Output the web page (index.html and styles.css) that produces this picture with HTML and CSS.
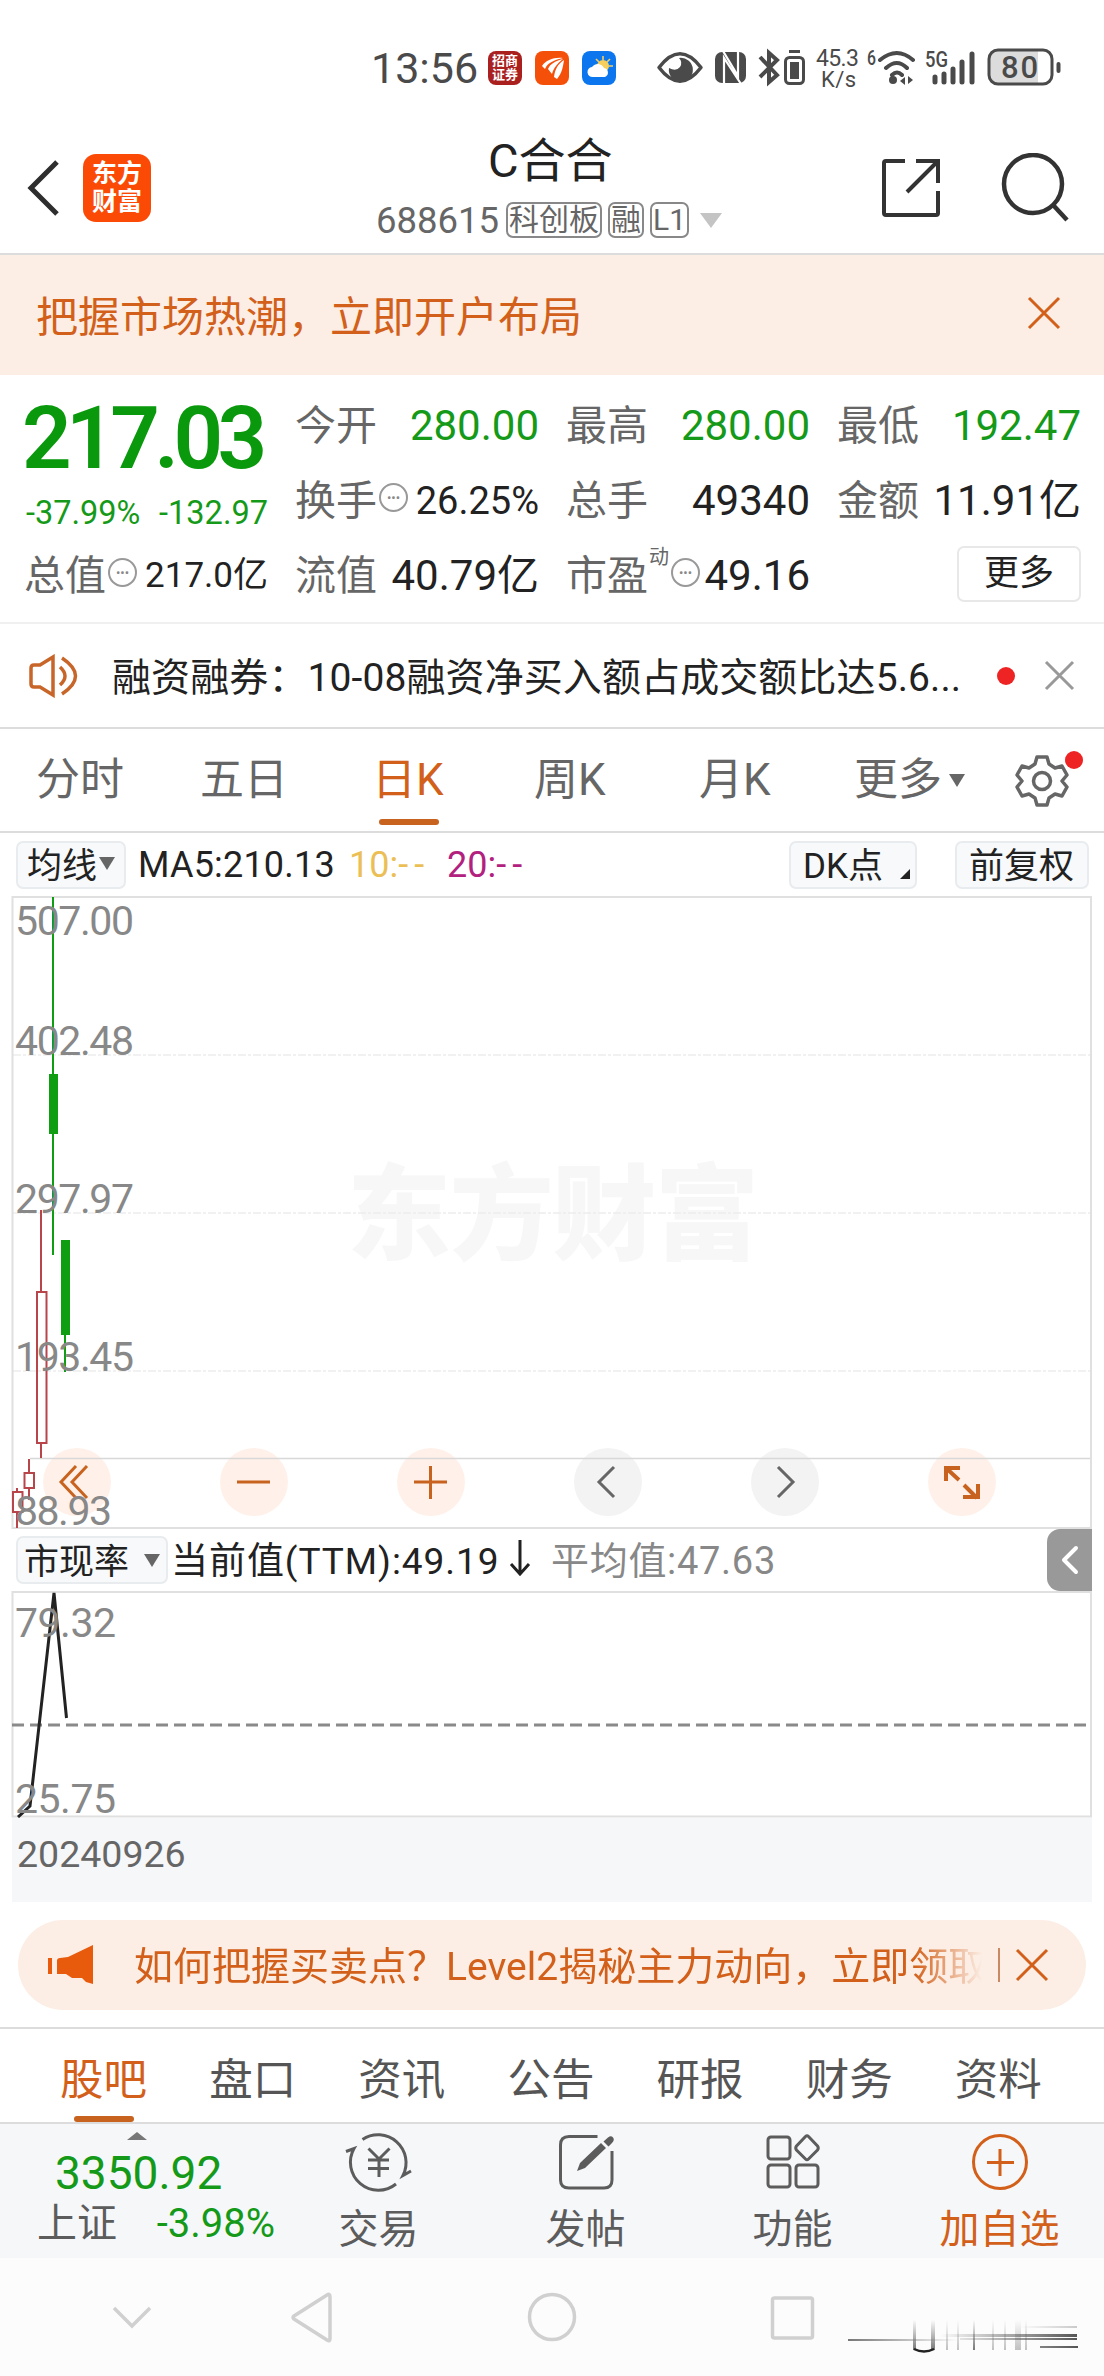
FILE: index.html
```html
<!DOCTYPE html>
<html lang="zh-CN">
  <head>
    <meta charset="UTF-8" />
    <meta name="viewport" content="width=device-width, initial-scale=1.0" />
    <title>C合合 688615</title>
    <link rel="stylesheet" href="styles.css">
  </head>
  <body>
    <div class="status-bar">
      <span class="clock">13:56</span>
      <div class="app-icon app-red"><span>招商</span><span>证券</span></div>
      <svg class="app-icon" viewBox="0 0 34 34">
        <rect width="34" height="34" rx="8" fill="#f4500a" />
        <path d="M7 15C11 9 19 6 28 7C20 9 13 11 10 18ZM13 18C15 13 20 10 28 8C23 12 19 16 17 23ZM19 26C20 18 23 13 29 9C28 16 27 22 22 28Z" fill="#fff" />
      </svg>
      <svg class="app-icon" viewBox="0 0 34 34">
        <rect width="34" height="34" rx="8" fill="#0c76ee" />
        <path d="M21 5v4M28 8l-3 3M31 15h-4M14 8l3 3" stroke="#f7cf5c" stroke-width="1.6" />
        <circle cx="21" cy="15" r="6" fill="#f7cf5c" />
        <path d="M11 26a5 5 0 0 1-1-10a7 7 0 0 1 12 1a4.700 4.700 0 0 1 1 9z" fill="#fff" />
      </svg>
      <svg class="system-icons" width="420" height="44" viewBox="650 46 420 44" fill="none" stroke="#4a4a4a">
        <!-- eye -->
        <path d="M659 67.500Q680 40 701 67.500Q680 95 659 67.500Z" stroke-width="3.500" stroke-linejoin="round" />
        <path d="M679 58A12 12 0 1 1 669 68Q676 72 680 67Q683 62 679 58Z" fill="#4a4a4a" stroke="none" />
        <!-- nfc -->
        <rect x="715" y="52" width="31" height="31" rx="7" fill="#4a4a4a" stroke="none" />
        <path d="M724 84V58L741 84M738 51V76L723 51" stroke="#fff" stroke-width="2.200" />
        <!-- bluetooth -->
        <path d="M760 57L777 75L769 82V53L777 60L760 77" stroke-width="4" />
        <rect x="785.500" y="57.500" width="18" height="26" rx="4" stroke-width="3" />
        <path d="M789 51.500h11" stroke-width="3" />
        <rect x="790" y="62" width="9" height="17" fill="#4a4a4a" stroke="none" />
        <!-- wifi -->
        <path d="M880 60Q897 46 913 60M886 68Q897 58 907 68M892 75Q897 70 902 75" stroke-width="4" stroke-linecap="round" />
        <circle cx="893" cy="80" r="4" fill="#4a4a4a" stroke="none" />
        <path d="M905 77v8l-5-4zM908 76v8l5-4z" fill="#4a4a4a" stroke="none" />
        <!-- signal -->
        <path d="M935 77v5M944 74v8M953 69v13M962 62v20M972 54v28" stroke-width="5" stroke-linecap="round" />
        <!-- battery -->
        <path d="M997 50h41v34h-41q-8 0-8-9v-16q0-9 8-9z" fill="#dcdcdc" stroke="none" />
        <rect x="989" y="50" width="63" height="34" rx="9" stroke-width="3" />
        <path d="M1058.500 64v7" stroke-width="4" stroke-linecap="round" />
        <g fill="#4a4a4a" stroke="none" class="system-text">
          <text x="816" y="66" font-size="23" font-weight="400" textLength="43">45.3</text>
          <text x="821" y="87" font-size="22" font-weight="400" textLength="35">K/s</text>
          <text x="867" y="65" font-size="20" textLength="9" lengthAdjust="spacingAndGlyphs">6</text>
          <text x="925" y="67" font-size="22" textLength="23" lengthAdjust="spacingAndGlyphs">5G</text>
          <text x="1001" y="78" font-size="31" textLength="37">80</text>
        </g>
      </svg>
    </div>

    <header class="header">
      <svg class="back" width="34" height="58" viewBox="0 0 34 58" fill="none" stroke="#2e2e2e" stroke-width="5">
        <path d="M31 3L5 29L31 55" />
      </svg>
      <div class="logo"><span>东方</span><span>财富</span></div>
      <div class="stock">
        <h1>C合合</h1>
        <div class="stock-code">
          <span>688615</span>
          <span class="tag">科创板</span>
          <span class="tag">融</span>
          <span class="tag">L1</span>
          <i class="caret"></i>
        </div>
      </div>
      <svg class="share" width="60" height="60" viewBox="0 0 60 60" fill="none" stroke="#333" stroke-width="4">
        <path d="M24 3H5Q3 3 3 5V55Q3 57 5 57H55Q57 57 57 55V33M35 3H57V25M56 4L26 34" />
      </svg>
      <svg class="search" width="68" height="70" viewBox="0 0 68 70" fill="none" stroke="#333" stroke-width="4.500">
        <circle cx="32" cy="31" r="29" />
        <path d="M53 53L66 67" />
      </svg>
    </header>

    <div class="banner">
      <span>把握市场热潮，立即开户布局</span>
      <svg width="34" height="34" viewBox="0 0 34 34" stroke="#d2601a" stroke-width="3"><path d="M2 2L32 32M32 2L2 32" /></svg>
    </div>

    <section class="quote">
      <div class="price-box">
        <div class="price">217.03</div>
        <div class="change"><span>-37.99%</span><span>-132.97</span></div>
      </div>
      <div class="item"><label>今开</label><b class="green">280.00</b></div>
      <div class="item"><label>最高</label><b class="green">280.00</b></div>
      <div class="item"><label>最低</label><b class="green">192.47</b></div>
      <div class="item"><label>换手</label><i class="dots">•••</i><b class="mid">26.25%</b></div>
      <div class="item"><label>总手</label><b>49340</b></div>
      <div class="item"><label>金额</label><b>11.91亿</b></div>
      <div class="item total"><label>总值</label><i class="dots">•••</i><b class="small">217.0亿</b></div>
      <div class="item"><label>流值</label><b>40.79亿</b></div>
      <div class="item"><label>市盈</label><sup>动</sup><i class="dots">•••</i><b>49.16</b></div>
      <div class="item"><button class="more">更多</button></div>
    </section>

    <div class="news">
      <svg width="52" height="44" viewBox="0 0 52 44" fill="none" stroke="#c8662a" stroke-width="3.500">
        <path d="M24 3V41L11 33H5Q2 33 2 30V14Q2 11 5 11H11Z" />
        <path d="M31 13Q41 22 31 31M33 4Q60 22 33 40" />
      </svg>
      <span class="news-text">融资融券：10-08融资净买入额占成交额比达5.6...</span>
      <i class="red-dot"></i>
      <svg width="31" height="31" viewBox="0 0 31 31" stroke="#999" stroke-width="3"><path d="M2 2L29 29M29 2L2 29" /></svg>
    </div>

    <nav class="period-tabs">
      <a>分时</a>
      <a>五日</a>
      <a class="active">日K</a>
      <a>周K</a>
      <a>月K</a>
      <a>更多<i class="caret"></i></a>
      <span class="settings">
        <svg width="54" height="54" viewBox="0 0 54 54" fill="none" stroke="#666" stroke-width="3.500" stroke-linejoin="round">
          <path d="M22 3H32L34 10L40 14L47 12L52 21L47 27L52 33L47 42L40 40L34 44L32 51H22L20 44L14 40L7 42L2 33L7 27L2 21L7 12L14 14L20 10Z" />
          <circle cx="27" cy="27" r="8.500" />
        </svg>
        <i class="red-dot"></i>
      </span>
    </nav>

    <div class="ma-row">
      <button class="chip">均线<i class="caret"></i></button>
      <span class="ma5">MA5:210.13</span>
      <span class="ma10">10:<em>--</em></span>
      <span class="ma20">20:<em>--</em></span>
      <button class="chip dk">DK点<i class="corner"></i></button>
      <button class="chip">前复权</button>
    </div>

    <svg class="k-chart" width="1104" height="633" viewBox="0 896 1104 633" fill="none">
      <text class="watermark" x="347" y="1252" textLength="412">东方财富</text>
      <g stroke="#ededed" stroke-width="1.500" stroke-dasharray="8 2 3 2">
        <path d="M13 1055H1091M13 1213H1091M13 1371H1091" />
      </g>
      <g fill="#fff1e9">
        <circle cx="77" cy="1482" r="34" />
        <circle cx="254" cy="1482" r="34" />
        <circle cx="431" cy="1482" r="34" />
        <circle cx="962" cy="1482" r="34" />
      </g>
      <g fill="#f3f3f3">
        <circle cx="608" cy="1482" r="34" />
        <circle cx="785" cy="1482" r="34" />
      </g>
      <path d="M30 1458.500H1091" stroke="#d8d8d8" stroke-width="1.500" />
      <path d="M12.500 1528V897H1091V1528Z" stroke="#e0e0e0" stroke-width="2" />
      <!-- candles -->
      <g stroke="#0f9d12" stroke-width="2">
        <path d="M53 897V1255M65 1335V1372" />
        <path d="M49 1074h9v60h-9zM61 1240h9v95h-9z" fill="#0f9d12" stroke="none" />
      </g>
      <g stroke="#b8454a" stroke-width="2">
        <path d="M41 1210V1292M41 1443V1458M29 1459V1473M29 1488V1500M17 1488V1492M17 1512V1528" />
        <path d="M37 1292h9.500v151H37zM24.500 1473h9.500v15h-9.500zM13 1492h9.500v20H13z" />
      </g>
      <g stroke="#c8621f" stroke-width="3">
        <path d="M76 1466L61 1482L76 1498M87 1466L72 1482L87 1498M237 1482H270M414 1482H447M430.500 1466V1499" />
        <path d="M946 1481V1468H960M946 1468L959 1480M964 1485L977 1498M978 1484V1497H963" stroke-width="4" />
      </g>
      <path d="M614 1467L599 1482L614 1497M778 1467L793 1482L778 1497" stroke="#666" stroke-width="3" />
      <g class="axis">
        <text x="15" y="935" textLength="119">507.00</text>
        <text x="15" y="1055" textLength="119">402.48</text>
        <text x="15" y="1213" textLength="119">297.97</text>
        <text x="15" y="1371" textLength="119">193.45</text>
        <text x="15" y="1525" textLength="97">88.93</text>
      </g>
    </svg>

    <div class="pe-row">
      <button class="chip">市现率<i class="caret"></i></button>
      <span class="pe-now">当前值(TTM):49.19<svg width="22" height="36" viewBox="0 0 22 36" fill="none" stroke="#222" stroke-width="3"><path d="M11 0V33M2 24L11 34L20 24" /></svg></span>
      <span class="pe-avg">平均值:47.63</span>
      <span class="handle">
        <svg width="18" height="30" viewBox="0 0 18 30" fill="none" stroke="#fff" stroke-width="4" stroke-linecap="round" stroke-linejoin="round"><path d="M15 3L3 15L15 27" /></svg>
      </span>
    </div>

    <svg class="pe-chart" width="1104" height="227" viewBox="0 1591 1104 227" fill="none">
      <path d="M12.500 1592H1091V1816.500H12.500Z" stroke="#e0e0e0" stroke-width="2" />
      <path d="M12 1725H1088" stroke="#8a8a8a" stroke-width="3" stroke-dasharray="12 6" />
      <path d="M18 1817L30 1806L54 1593L66.500 1718" stroke="#222" stroke-width="3" />
      <g class="axis">
        <text x="15" y="1637" textLength="101">79.32</text>
        <text x="15" y="1813" textLength="101">25.75</text>
      </g>
    </svg>
    <div class="date">20240926</div>

    <div class="promo">
      <svg width="46" height="40" viewBox="0 0 46 40" fill="#e85a0c">
        <path d="M0 13h4v16H0zM9 16Q9 13 12 13L20 12L45 0V39L38 37L34 33H24L18 29H9Z" />
      </svg>
      <span class="promo-text">如何把握买卖点？Level2揭秘主力动向，立即领取</span>
      <svg class="promo-close" width="34" height="34" viewBox="0 0 34 34" stroke="#d2601a" stroke-width="3"><path d="M2 2L32 32M32 2L2 32" /></svg>
    </div>

    <nav class="info-tabs">
      <a class="active">股吧</a>
      <a>盘口</a>
      <a>资讯</a>
      <a>公告</a>
      <a>研报</a>
      <a>财务</a>
      <a>资料</a>
    </nav>

    <footer class="toolbar">
      <div class="index">
        <i class="up"></i>
        <div class="index-value">3350.92</div>
        <div class="index-change"><span>上证</span><span class="green">-3.98%</span></div>
      </div>
      <div class="tool">
        <svg width="68" height="60" viewBox="0 0 68 60" fill="none" stroke="#5c5c5c" stroke-width="3">
          <path d="M17.500 7.500A28 28 0 0 1 58 43.500L66 39M51 52A28 28 0 0 1 9 16.500L1 19.500" />
          <path d="M23.500 16.500L34 27L44.500 16.500M34 27V45M23 28H44M23 36.500H44" />
        </svg>
        <span>交易</span>
      </div>
      <div class="tool">
        <svg width="56" height="60" viewBox="0 0 56 60" fill="none" stroke="#5c5c5c" stroke-width="3">
          <path d="M39.500 4.500H11Q2.500 4.500 2.500 13V48Q2.500 56 11 56H46Q54 56 54 48V19" />
          <path d="M19 39L22 31L43 11L48 16L27 36ZM45.500 9.500L50 5.500Q53 3 55 5.500Q57 8 54 11L50.500 14.500Z" fill="#5c5c5c" stroke="none" />
        </svg>
        <span>发帖</span>
      </div>
      <div class="tool">
        <svg width="54" height="60" viewBox="0 0 54 60" fill="none" stroke="#5c5c5c" stroke-width="3">
          <rect x="2" y="5" width="22" height="22" rx="3" />
          <rect x="2" y="33" width="22" height="22" rx="3" />
          <rect x="30" y="33" width="22" height="22" rx="3" />
          <path d="M39.500 4.500L30.500 14Q29 16 30.500 18L39.500 27Q41 28.500 42.500 27L51.500 18Q53 16 51.500 14L42.500 4.500Q41 3 39.500 4.500Z" />
        </svg>
        <span>功能</span>
      </div>
      <div class="tool add">
        <svg width="60" height="60" viewBox="0 0 60 60" fill="none" stroke="#d2601a" stroke-width="3">
          <circle cx="30" cy="30" r="26.500" />
          <path d="M30 17V44M17 30.500H44" />
        </svg>
        <span>加自选</span>
      </div>
    </footer>

    <div class="system-nav">
      <svg width="1104" height="118" viewBox="0 2258 1104 118" fill="none" stroke="#d0d0d0" stroke-width="3.500">
        <path d="M114 2308L132 2326L150 2308" />
        <path d="M330 2297V2339Q330 2342 327 2340L294 2319Q292 2317.500 294 2316L327 2295Q330 2293 330 2297Z" />
        <circle cx="552" cy="2317" r="22.500" />
        <rect x="772.500" y="2298" width="40" height="40" rx="2" />
        <defs>
          <linearGradient id="fadeDown" x1="0" y1="0" x2="0" y2="1"><stop offset="0" stop-color="#777" stop-opacity="0" /><stop offset="1" stop-color="#777" /></linearGradient>
          <linearGradient id="fadeRight"><stop offset="0" stop-color="#555" stop-opacity="0" /><stop offset="1" stop-color="#555" /></linearGradient>
          <linearGradient id="fadeLeft"><stop offset="0" stop-color="#777" /><stop offset="1" stop-color="#777" stop-opacity="0" /></linearGradient>
        </defs>
        <g stroke="none">
          <path d="M848 2339h110v2H848z" fill="url(#fadeLeft)" />
          <path d="M913 2320h3v30h-3zM931 2320h4v30h-4zM973 2320h2v30h-2z" fill="url(#fadeDown)" />
          <path d="M946 2320h2v30h-2zM957 2320h2v30h-2zM992 2320h2v30h-2zM1004 2320h2v30h-2zM1015 2320h6v30h-6zM1025 2320h2v30h-2z" fill="url(#fadeDown)" opacity=".45" />
          <path d="M940 2334h137v3H940zM960 2338h117v2H960zM1040 2346h38v2h-38z" fill="url(#fadeRight)" />
          <path d="M1020 2326h57v2h-57z" fill="url(#fadeRight)" opacity=".3" />
        </g>
        <path d="M914 2349Q924 2354 934 2349" stroke="#222" stroke-width="2.500" />
      </svg>
    </div>
  </body>
</html>
```
FILE: styles.css
```css
* {
  box-sizing: border-box;
}

body {
  margin: 0;
  width: 1104px;
  background: #fff;
  color: #222;
  font-family: Roboto, "Noto Sans CJK SC", sans-serif;
}

svg {
  display: block;
  flex-shrink: 0;
}

i,
em {
  font-style: normal;
}

button {
  font-family: inherit;
  color: #222;
}

.green {
  color: #149a18;
}

.caret {
  border: 8px solid transparent;
  border-top: 13px solid #666;
  border-bottom: 0;
}

.red-dot {
  width: 18px;
  height: 18px;
  border-radius: 50%;
  background: #ee2424;
}

/* status bar */
.status-bar {
  display: flex;
  align-items: center;
  height: 136px;
  padding-left: 371px;
}

.clock {
  width: 117px;
  font-size: 43px;
  color: #4a4a4a;
}

.app-icon {
  width: 34px;
  height: 34px;
  margin-right: 13px;
}

.app-red {
  display: flex;
  flex-direction: column;
  justify-content: center;
  align-items: center;
  border-radius: 8px;
  background: #a9201f;
  color: #fff;
  font-size: 13px;
  line-height: 14px;
  font-weight: 700;
}

.system-icons {
  margin-left: 21px;
}

.system-text {
  font-weight: 500;
}

/* header */
.header {
  display: flex;
  align-items: center;
  height: 119px;
  padding: 0 0 13px 26px;
  border-bottom: 2px solid #dcdcdc;
}

.logo {
  display: flex;
  flex-direction: column;
  align-items: center;
  justify-content: center;
  width: 68px;
  height: 68px;
  margin-left: 23px;
  border-radius: 13px;
  background: #fb4a05;
  color: #fff;
  font-size: 25px;
  line-height: 28px;
  font-weight: 700;
}

.stock {
  width: 360px;
  margin-left: 225px;
}

h1 {
  margin: 0 0 0 112px;
  font-size: 47px;
  line-height: 58px;
  font-weight: 400;
}

.stock-code {
  display: flex;
  align-items: center;
  height: 48px;
  margin-top: 6px;
  font-size: 36.5px;
  color: #666;
  white-space: nowrap;
}

.tag {
  height: 36px;
  margin-left: 6px;
  padding: 0 1px;
  border: 2px solid #888;
  border-radius: 7px;
  font-size: 30px;
  line-height: 31px;
}

.stock-code span:first-child {
  margin-right: 1px;
}

.stock-code .caret {
  margin-left: 11px;
  border-width: 15px 11px 0;
  border-top-color: #c4c4c4;
}

.share {
  margin-left: 145px;
}

.search {
  margin-left: 60px;
}

/* open account banner */
.banner {
  display: flex;
  align-items: center;
  justify-content: space-between;
  height: 120px;
  padding: 0 43px 4px 36px;
  background: #fceee5;
  color: #d2601a;
  font-size: 42px;
}

/* quote */
.quote {
  display: grid;
  grid-template-columns: 242px 244px 244px 244px;
  grid-template-rows: 74px 75px 75px;
  column-gap: 27px;
  height: 249px;
  padding: 14px 0 0 26px;
  border-bottom: 2px solid #f0f0f0;
}

.price-box {
  grid-row: span 2;
}

.price {
  height: 95px;
  margin-left: -4px;
  color: #0a990c;
  font-size: 87px;
  line-height: 99px;
  font-weight: 600;
  letter-spacing: -5.6px;
}

.change {
  display: flex;
  justify-content: space-between;
  color: #149a18;
  font-size: 32.5px;
  line-height: 58px;
}

.item {
  display: flex;
  align-items: center;
  line-height: 60px;
  font-size: 42px;
  white-space: nowrap;
}

.total {
  margin-left: -2px;
}

.item label {
  color: #666;
  font-size: 41px;
}

.item b {
  margin-left: auto;
  font-weight: 400;
}

.item .mid {
  font-size: 38px;
}

.item .small {
  font-size: 35px;
}

.item sup {
  align-self: flex-start;
  width: 20px;
  margin: 1px 0 0 1px;
  color: #666;
  font-size: 20px;
  line-height: 36px;
}

.dots {
  width: 29px;
  height: 29px;
  margin: 0 0 6px 2px;
  border: 2px solid #999;
  border-radius: 50%;
  color: #888;
  font-size: 13px;
  line-height: 25px;
  text-align: center;
}

.more {
  width: 124px;
  height: 56px;
  margin: 0 0 4px auto;
  border: 2px solid #e8e8e8;
  border-radius: 7px;
  background: #fff;
  font-size: 35px;
  line-height: 44px;
}

/* news */
.news {
  display: flex;
  align-items: center;
  height: 105px;
  padding-left: 29px;
  border-bottom: 2px solid #dcdcdc;
}

.news-text {
  width: 885px;
  margin: -4px 0 0 31px;
  font-size: 39px;
  letter-spacing: 0.1px;
  white-space: nowrap;
}

.news .red-dot {
  margin-right: 29px;
}

/* k line period tabs */
.period-tabs {
  display: flex;
  height: 104px;
  padding-left: 36px;
  border-bottom: 2px solid #dcdcdc;
  color: #666;
  font-size: 44px;
  line-height: 104px;
}

.period-tabs a {
  display: flex;
  align-items: center;
  position: relative;
  width: 164px;
}

.period-tabs a:nth-child(3) {
  width: 163px;
  padding-left: 8px;
}

.period-tabs a:nth-child(4) {
  padding-left: 7px;
}

.period-tabs a:nth-child(5) {
  width: 163px;
  padding-left: 8px;
}

.period-tabs .caret {
  margin-left: 7px;
}

.active {
  color: #d2601a;
}

.period-tabs .active::after,
.info-tabs .active::after {
  content: "";
  position: absolute;
  left: 15px;
  bottom: 6px;
  width: 60px;
  height: 6px;
  border-radius: 3px;
  background: #c8621f;
}

.settings {
  position: relative;
  margin: 25px 0 0 -3px;
}

.settings .red-dot {
  position: absolute;
  top: -3px;
  right: -14px;
}

/* moving averages */
.ma-row,
.pe-row {
  display: flex;
  align-items: center;
  height: 63px;
  padding-left: 16px;
  font-size: 36px;
  white-space: nowrap;
}

.chip {
  display: flex;
  align-items: center;
  height: 48px;
  padding: 0 9px 4px;
  border: 2px solid #e9ecee;
  border-radius: 7px;
  background: #f7f9fa;
  font-size: 35px;
}

.chip .caret {
  margin: 2px 0 0 2px;
}

.ma5 {
  width: 211px;
  margin-left: 12px;
  letter-spacing: 0.2px;
}

.ma10 {
  width: 98px;
  color: #ebbf55;
}

.ma20 {
  color: #b3217f;
}

.ma-row em {
  letter-spacing: 6px;
}

.dk {
  width: 128px;
  margin: 0 38px 0 auto;
  padding: 0 5px 4px 12px;
}

.dk .corner {
  margin: 22px 0 0 auto;
  border-left: 10px solid transparent;
  border-bottom: 10px solid #222;
}

.ma-row .chip:last-child {
  width: 134px;
  margin-right: 15px;
  padding: 0 12px 4px;
}

/* charts */
.axis text {
  fill: #888;
  font-size: 41px;
}

.watermark {
  fill: #f7f7f7;
  font-size: 104px;
  font-weight: 900;
}

.pe-row {
  height: 62px;
}

.pe-row .chip {
  width: 152px;
  padding: 0 6px 4px;
}

.pe-row .chip .caret {
  margin: 4px 0 0 auto;
}

.pe-now {
  display: flex;
  align-items: center;
  width: 380px;
  height: 54px;
  margin: -5px 0 0 3px;
  font-size: 37px;
  letter-spacing: 0.95px;
}

.pe-now svg {
  margin-left: 9px;
}

.pe-avg {
  margin-top: -5px;
  color: #888;
  font-size: 38px;
  letter-spacing: 0.7px;
}

.handle {
  display: flex;
  align-items: center;
  justify-content: center;
  width: 45px;
  height: 62px;
  margin: 0 12px 0 auto;
  border-radius: 13px 0 0 13px;
  background: #999;
}

.date {
  height: 84px;
  margin: 0 12px;
  padding-left: 5px;
  background: #f6f7f9;
  color: #666;
  font-size: 37.5px;
  line-height: 73px;
}

/* promo */
.promo {
  display: flex;
  align-items: center;
  height: 90px;
  margin: 18px 18px 17px;
  padding-left: 30px;
  border-radius: 45px;
  background: #fceee5;
  color: #d2601a;
}

.promo-text {
  width: 848px;
  margin: -5px 0 0 40px;
  overflow: hidden;
  font-size: 39px;
  white-space: nowrap;
  -webkit-mask-image: linear-gradient(to right, #000 92%, transparent);
  mask-image: linear-gradient(to right, #000 92%, transparent);
}

.promo-close {
  box-sizing: content-box;
  margin-left: 16px;
  padding-left: 15px;
  border-left: 2px solid #c98a63;
}

/* info tabs */
.info-tabs {
  display: flex;
  height: 97px;
  padding-left: 60px;
  border-top: 2px solid #dcdcdc;
  border-bottom: 2px solid #dcdcdc;
  color: #555;
  font-size: 43.5px;
  line-height: 104px;
}

.info-tabs a {
  position: relative;
  width: 149.4px;
}

.info-tabs .active {
  color: #d2601a;
}

.info-tabs .active::after {
  left: 14px;
  bottom: 0;
}

/* bottom toolbar */
.toolbar {
  display: flex;
  height: 134px;
  background: #f6f7f9;
  color: #5c5c5c;
  font-size: 40px;
}

.index {
  width: 275px;
  padding: 8px 0 0 37px;
}

.up {
  display: block;
  width: 0;
  margin-left: 90px;
  border: 10px solid transparent;
  border-top: 0;
  border-bottom: 8px solid #777;
}

.index-value {
  margin-left: 18px;
  color: #149a18;
  font-size: 46px;
  line-height: 67px;
}

.index-change {
  display: flex;
  justify-content: space-between;
  line-height: 34px;
}

.tool {
  display: flex;
  flex-direction: column;
  align-items: center;
  width: 207px;
  padding-top: 8px;
  line-height: 76px;
}

.add {
  color: #d2601a;
}

.system-nav {
  height: 118px;
  background: #fcfcfc;
}
```
